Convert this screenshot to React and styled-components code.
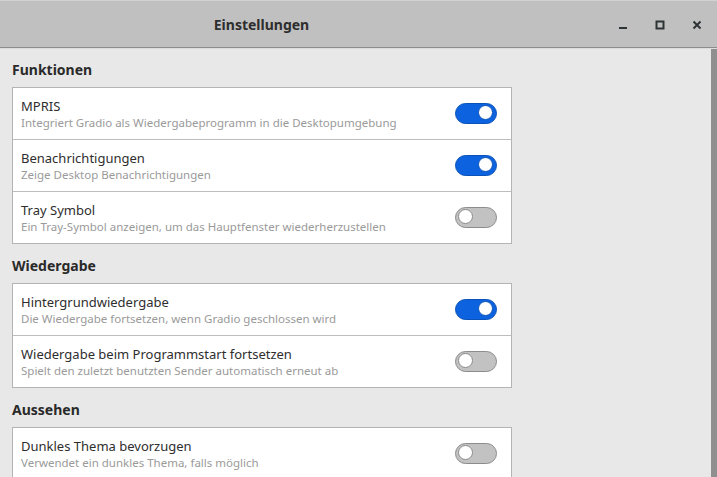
import React, {useState} from 'react'
import styled, {createGlobalStyle} from 'styled-components'

const GlobalStyle = createGlobalStyle`
  html, body {
    margin: 0;
    padding: 0;
    height: 100%;
    overflow: hidden;
  }
  body {
    font-family: "Noto Sans", "DejaVu Sans", sans-serif;
    background: #e8e8e8;
    color: #2e2e2e;
  }
`

const sections = [
  {
    title: 'Funktionen',
    rows: [
      {id: 'mpris', label: 'MPRIS', hint: 'Integriert Gradio als Wiedergabeprogramm in die Desktopumgebung', on: true},
      {id: 'notify', label: 'Benachrichtigungen', hint: 'Zeige Desktop Benachrichtigungen', on: true},
      {id: 'tray', label: 'Tray Symbol', hint: 'Ein Tray-Symbol anzeigen, um das Hauptfenster wiederherzustellen', on: false},
    ],
  },
  {
    title: 'Wiedergabe',
    rows: [
      {id: 'bg', label: 'Hintergrundwiedergabe', hint: 'Die Wiedergabe fortsetzen, wenn Gradio geschlossen wird', on: true},
      {id: 'resume', label: 'Wiedergabe beim Programmstart fortsetzen', hint: 'Spielt den zuletzt benutzten Sender automatisch erneut ab', on: false},
    ],
  },
  {
    title: 'Aussehen',
    rows: [
      {id: 'dark', label: 'Dunkles Thema bevorzugen', hint: 'Verwendet ein dunkles Thema, falls möglich', on: false},
    ],
  },
]

function Switch({on, onToggle}) {
  return (
    <Toggle.Track $on={on} onClick={onToggle}>
      <Toggle.Knob $on={on} />
    </Toggle.Track>
  )
}

export default function App() {
  const [values, setValues] = useState(() => {
    const v = {}
    sections.forEach(s => s.rows.forEach(r => { v[r.id] = r.on }))
    return v
  })

  const flip = id => setValues(prev => ({...prev, [id]: !prev[id]}))

  return (
    <>
      <GlobalStyle />
      <Window>
        <HeaderBar>
          <Title>Einstellungen</Title>
          <Controls>
            <WinButton aria-label="minimize">
              <svg width="10" height="10" viewBox="0 0 10 10">
                <rect x="1" y="7" width="8" height="2" fill="#2e3436" />
              </svg>
            </WinButton>
            <WinButton aria-label="maximize">
              <svg width="10" height="10" viewBox="0 0 10 10">
                <rect x="1.5" y="1.5" width="7" height="7" fill="none" stroke="#2e3436" strokeWidth="2" />
              </svg>
            </WinButton>
            <WinButton aria-label="close">
              <svg width="10" height="10" viewBox="0 0 10 10">
                <path d="M1.5 1.5 L8.5 8.5 M8.5 1.5 L1.5 8.5" stroke="#2e3436" strokeWidth="2" />
              </svg>
            </WinButton>
          </Controls>
        </HeaderBar>
        <Body>
          <Content>
            {sections.map(section => (
              <Section key={section.title}>
                <SectionTitle>{section.title}</SectionTitle>
                <Card>
                  {section.rows.map(row => (
                    <Row key={row.id}>
                      <Text>
                        <Label>{row.label}</Label>
                        <Hint>{row.hint}</Hint>
                      </Text>
                      <Switch on={values[row.id]} onToggle={() => flip(row.id)} />
                    </Row>
                  ))}
                </Card>
              </Section>
            ))}
          </Content>
          <Scrollbar />
        </Body>
      </Window>
    </>
  )
}

const Window = styled.div`
  width: 717px;
  height: 477px;
  display: flex;
  flex-direction: column;
  overflow: hidden;
`

const HeaderBar = styled.header`
  height: 48px;
  flex: none;
  display: flex;
  align-items: center;
  box-sizing: border-box;
  background: #c0c0c0;
  border-top: 1px solid #d2d2d2;
  border-bottom: 1px solid #8c8c8c;
`

const Title = styled.h1`
  margin: 0;
  width: 523px;
  text-align: center;
  font-size: 14px;
  font-weight: 700;
  color: #2e2e2e;
  padding-top: 1px;
`

const Controls = styled.div`
  margin-left: auto;
  display: flex;
  align-items: center;
  gap: 17px;
  padding-right: 10px;
  padding-top: 1px;
`

const WinButton = styled.span`
  width: 20px;
  height: 20px;
  display: flex;
  align-items: center;
  justify-content: center;
`

const Body = styled.div`
  flex: 1;
  display: flex;
  min-height: 0;
  border-top: 1px solid #dcdcdc;
`

const Content = styled.main`
  flex: 1;
  padding: 12px 0 0 12px;
`

const Scrollbar = styled.div`
  width: 6px;
  flex: none;
  background: #8f8f8f;
`

const Section = styled.section`
  margin-bottom: 13px;
`

const SectionTitle = styled.h2`
  margin: 0 0 9px;
  font-size: 14px;
  line-height: 17px;
  font-weight: 700;
  color: #2a2a2a;
`

const Card = styled.div`
  width: 500px;
  box-sizing: border-box;
  background: #ffffff;
  border: 1px solid #b4b4b4;
`

const Row = styled.div`
  height: 51px;
  box-sizing: border-box;
  display: flex;
  align-items: center;
  padding: 0 14px 0 8px;
  & + & {
    height: 52px;
    border-top: 1px solid #bdbdbd;
  }
`

const Text = styled.div`
  flex: 1;
  display: flex;
  flex-direction: column;
  padding-top: 1px;
`

const Label = styled.span`
  font-size: 13px;
  line-height: 17px;
  color: #2e2e2e;
`

const Hint = styled.span`
  font-size: 11.5px;
  line-height: 15px;
  color: #9a9a9a;
`

const Toggle = {
  Track: styled.span`
    position: relative;
    width: 42px;
    height: 21px;
    box-sizing: border-box;
    border-radius: 11px;
    flex: none;
    cursor: pointer;
    background: ${p => (p.$on ? '#0d63df' : '#c2c2c2')};
    border: 1px solid ${p => (p.$on ? '#0a52b8' : '#8c8c8c')};
  `,
  Knob: styled.span`
    position: absolute;
    top: 1px;
    left: ${p => (p.$on ? '22px' : '2px')};
    width: 15px;
    height: 15px;
    box-sizing: border-box;
    border-radius: 50%;
    background: #ffffff;
    border: 1px solid ${p => (p.$on ? '#0a52b8' : '#8c8c8c')};
  `,
}
